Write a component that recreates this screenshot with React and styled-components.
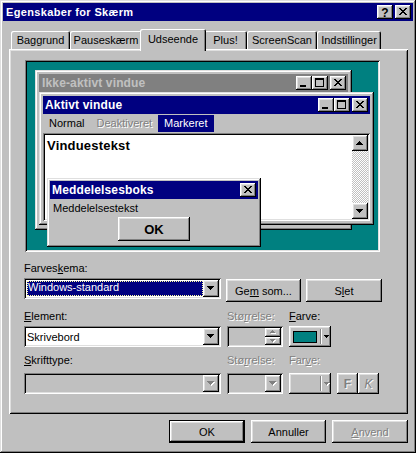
import React from "react";
import styled, { createGlobalStyle, css } from "styled-components";

const GlobalStyle = createGlobalStyle`
  html, body { margin: 0; padding: 0; background: #c0c0c0; }
  body { font-family: "Liberation Sans", Arial, sans-serif; font-size: 11px; color: #000; }
  * { box-sizing: border-box; }
`;

const raised = css`
  box-shadow: inset -1px -1px #000, inset 1px 1px #fff, inset -2px -2px #808080, inset 2px 2px #dfdfdf;
`;
const frame = css`
  box-shadow: inset -1px -1px #000, inset 1px 1px #dfdfdf, inset -2px -2px #808080, inset 2px 2px #fff;
`;
const sunken = css`
  box-shadow: inset 1px 1px #808080, inset -1px -1px #fff, inset 2px 2px #000, inset -2px -2px #dfdfdf;
`;
const disabledText = css`
  color: #808080;
  text-shadow: 1px 1px 0 #fff;
`;

/* ---------- glyphs ---------- */
const CLOSE = ["XX....XX", ".XX..XX.", "..XXXX..", "...XX...", "..XXXX..", ".XX..XX.", "XX....XX"];

const CloseGlyph = ({ x = 4, y = 3 }) => (
  <g fill="#000">
    {CLOSE.flatMap((row, r) =>
      row.split("").map((c, i) => (c === "X" ? <rect key={r + "-" + i} x={x + i} y={y + r} width={1} height={1} /> : null))
    )}
  </g>
);

const Caption = ({ kind }) => (
  <CapButton $gap={kind === "close" || kind === "help"}>
    <svg width="16" height="14" shapeRendering="crispEdges">
      {kind === "close" && <CloseGlyph />}
      {kind === "min" && <rect x="4" y="9" width="6" height="2" fill="#000" />}
      {kind === "max" && (
        <g fill="#000">
          <rect x="3" y="2" width="9" height="2" />
          <rect x="3" y="2" width="1" height="9" />
          <rect x="11" y="2" width="1" height="9" />
          <rect x="3" y="10" width="9" height="1" />
        </g>
      )}
      {kind === "help" && (
        <text x="8" y="11.5" textAnchor="middle" fontSize="12" fontWeight="bold" fontFamily="Liberation Sans, Arial, sans-serif" fill="#000">?</text>
      )}
    </svg>
  </CapButton>
);

const Arrow = ({ dir = "down", size = 4, disabled }) => {
  const w = size * 2 - 1;
  const rows = [];
  for (let i = 0; i < size; i++) {
    const rw = dir === "down" ? w - 2 * i : 1 + 2 * i;
    rows.push(<rect key={i} x={(w - rw) / 2} y={i} width={rw} height={1} />);
  }
  return (
    <svg width={w + 1} height={size + 1} shapeRendering="crispEdges">
      {disabled && <g fill="#fff" transform="translate(1,1)">{rows}</g>}
      <g fill={disabled ? "#808080" : "#000"}>{rows}</g>
    </svg>
  );
};

/* ---------- dialog shell ---------- */
const Dialog = styled.div`
  width: 416px;
  height: 453px;
  padding: 3px;
  background: #c0c0c0;
  ${frame};
  display: flex;
  flex-direction: column;
`;

const TitleBar = styled.div`
  height: 18px;
  flex: none;
  background: ${(p) => p.$bg || "#000080"};
  color: ${(p) => p.$fg || "#fff"};
  font-weight: bold;
  font-size: ${(p) => p.$fs || 11}px;
  letter-spacing: ${(p) => p.$ls ?? 0.35}px;
  display: flex;
  align-items: center;
  padding: 0 2px 0 ${(p) => p.$pl ?? 3}px;
  white-space: nowrap;
  overflow: hidden;
`;

const TitleText = styled.span`
  flex: 1;
`;

const CapButton = styled.div`
  width: 16px;
  height: 14px;
  flex: none;
  background: #c0c0c0;
  ${raised};
  margin-left: ${(p) => (p.$gap ? 2 : 0)}px;
  display: flex;
  svg { display: block; }
`;

const Body = styled.div`
  flex: 1;
  padding: 8px 5px 0 6px;
  display: flex;
  flex-direction: column;
`;

const TabRow = styled.div`
  height: 20px;
  display: flex;
  align-items: flex-end;
  padding-left: 2px;
  position: relative;
  z-index: 1;
`;

const Tab = styled.div`
  position: relative;
  flex: none;
  width: ${(p) => p.$w + (p.$active ? 4 : 0)}px;
  height: ${(p) => (p.$active ? 22 : 18)}px;
  margin: ${(p) => (p.$active ? "0 -2px -2px" : "0")};
  z-index: ${(p) => (p.$active ? 2 : 1)};
  padding-bottom: ${(p) => (p.$active ? 3 : 0)}px;
  background: #c0c0c0;
  border-radius: 2px 2px 0 0;
  box-shadow: inset 1px 1px #fff, inset -1px 0 #000, inset -2px 0 #808080;
  display: flex;
  align-items: center;
  justify-content: center;
  white-space: nowrap;
`;

const Panel = styled.div`
  height: 365px;
  flex: none;
  background: #c0c0c0;
  box-shadow: inset 1px 1px #fff, inset -1px -1px #000, inset 2px 2px #dfdfdf, inset -2px -2px #808080;
  padding: 11px 0 0 15px;
  display: flex;
  flex-direction: column;
`;

/* ---------- preview (free canvas of little windows) ---------- */
const Preview = styled.div`
  position: relative;
  margin-left: 1px;
  width: 355px;
  height: 192px;
  flex: none;
  background: #008080;
  ${sunken};
  overflow: hidden;
`;

const MiniWindow = styled.div`
  position: absolute;
  left: ${(p) => p.$x}px;
  top: ${(p) => p.$y}px;
  width: ${(p) => p.$w}px;
  height: ${(p) => p.$h}px;
  background: #c0c0c0;
  ${frame};
  padding: ${(p) => p.$pad ?? 4}px;
  display: flex;
  flex-direction: column;
`;

const MenuBar = styled.div`
  height: 19px;
  flex: none;
  display: flex;
  align-items: flex-start;
`;

const MenuItem = styled.div`
  height: 17px;
  margin-top: 1px;
  line-height: 17px;
  padding: 0 6px;
  background: ${(p) => (p.$selected ? "#000080" : "transparent")};
  color: ${(p) => (p.$selected ? "#fff" : "#000")};
  ${(p) => p.$disabled && disabledText};
`;

const Client = styled.div`
  flex: 1;
  background: #fff;
  ${sunken};
  padding: 2px;
  display: flex;
`;

const ClientText = styled.div`
  flex: 1;
  padding: 3px 2px;
  font-size: 13px;
  font-weight: bold;
  letter-spacing: 0.2px;
  line-height: 15px;
`;

const Scrollbar = styled.div`
  width: 16px;
  flex: none;
  display: flex;
  flex-direction: column;
`;

const ScrollButton = styled.div`
  width: 16px;
  height: 16px;
  flex: none;
  background: #c0c0c0;
  ${raised};
  display: flex;
  align-items: center;
  justify-content: center;
  svg { display: block; }
`;

const ScrollTrack = styled.div`
  flex: 1;
  background: repeating-conic-gradient(#fff 0% 25%, #c0c0c0 0% 50%) 0 0 / 2px 2px;
`;

const MsgText = styled.div`
  line-height: 13px;
  padding: 3px 0 0 3px;
`;

const MsgButtonRow = styled.div`
  display: flex;
  justify-content: center;
  margin-top: 2px;
`;

/* ---------- form controls ---------- */
const Label = styled.div`
  height: 13px;
  line-height: 13px;
  white-space: nowrap;
  ${(p) => p.$disabled && disabledText};
`;

const Button = styled.div`
  width: ${(p) => p.$w}px;
  height: ${(p) => p.$h || 23}px;
  flex: none;
  background: #c0c0c0;
  ${raised};
  ${(p) =>
    p.$default &&
    css`
      box-shadow: inset 0 0 0 1px #000, inset -2px -2px #000, inset 2px 2px #fff, inset -3px -3px #808080,
        inset 3px 3px #dfdfdf;
    `};
  display: flex;
  align-items: center;
  justify-content: center;
  font-size: ${(p) => p.$fs || 11}px;
  font-weight: ${(p) => (p.$bold ? "bold" : "normal")};
  font-style: ${(p) => (p.$italic ? "italic" : "normal")};
  margin-top: ${(p) => p.$mt || 0}px;
  ${(p) => p.$disabled && disabledText};
`;

const Row = styled.div`
  display: flex;
  align-items: flex-start;
  gap: 5px;
  margin-top: 3px;
`;

const Field = styled.div`
  width: ${(p) => p.$w}px;
  height: 21px;
  flex: none;
  background: ${(p) => (p.$disabled ? "#c0c0c0" : "#fff")};
  ${sunken};
  padding: 2px;
  display: flex;
`;

const FieldValue = styled.div`
  flex: 1;
  display: flex;
  align-items: center;
  padding-left: 1px;
  white-space: nowrap;
`;

const Selection = styled.div`
  width: 176px;
  height: 15px;
  line-height: 13px;
  padding-left: 1px;
  background: #000080;
  color: #fff;
  outline: 1px dotted #ffff9f;
  outline-offset: -1px;
`;

const DropButton = styled.div`
  width: 16px;
  flex: none;
  background: #c0c0c0;
  ${raised};
  display: flex;
  align-items: center;
  justify-content: center;
  svg { display: block; }
`;

const Spin = styled.div`
  width: 16px;
  flex: none;
  display: flex;
  flex-direction: column;
`;

const SpinHalf = styled.div`
  flex: 1;
  background: #c0c0c0;
  ${raised};
  display: flex;
  align-items: center;
  justify-content: center;
  svg { display: block; }
`;

const FieldGrid = styled.div`
  display: grid;
  grid-template-columns: 197px 56px 42px auto;
  grid-template-rows: 13px 21px;
  column-gap: 6px;
  row-gap: ${(p) => p.$gap}px;
  margin-top: ${(p) => p.$mt}px;
`;

const ColorButton = styled.div`
  width: 42px;
  height: 21px;
  background: #c0c0c0;
  ${raised};
  display: flex;
  align-items: center;
  padding-left: 4px;
  svg { display: block; }
`;

const Swatch = styled.div`
  width: 24px;
  height: 12px;
  flex: none;
  border: 1px solid #000;
  background: ${(p) => p.$color};
  visibility: ${(p) => (p.$hidden ? "hidden" : "visible")};
`;

const Separator = styled.div`
  width: 2px;
  height: 15px;
  margin: 0 2px 0 3px;
  border-left: 1px solid #808080;
  border-right: 1px solid #fff;
`;

const StyleButtons = styled.div`
  display: flex;
`;

const FooterRow = styled.div`
  display: flex;
  justify-content: flex-end;
  gap: 6px;
  margin-top: 6px;
`;

const TABS = [
  ["Baggrund", 59],
  ["Pauseskærm", 72],
  ["Udseende", 62, true],
  ["Plus!", 43],
  ["ScreenScan", 70],
  ["Indstillinger", 64],
];

const Combo = ({ w, disabled, children }) => (
  <Field $w={w} $disabled={disabled}>
    <FieldValue>{children}</FieldValue>
    <DropButton>
      <Arrow disabled={disabled} />
    </DropButton>
  </Field>
);

export default function App() {
  return (
    <>
      <GlobalStyle />
      <Dialog>
        <TitleBar>
          <TitleText>Egenskaber for Skærm</TitleText>
          <Caption kind="help" />
          <Caption kind="close" />
        </TitleBar>
        <Body>
          <TabRow>
            {TABS.map(([t, w, a]) => (
              <Tab key={t} $w={w} $active={a}>
                {t}
              </Tab>
            ))}
          </TabRow>
          <Panel>
            <Preview>
              <MiniWindow $x={10} $y={10} $w={317} $h={160}>
                <TitleBar $bg="#808080" $fg="#c0c0c0" $pl={3} $fs={12} $ls={0.15}>
                  <TitleText>Ikke-aktivt vindue</TitleText>
                  <Caption kind="min" />
                  <Caption kind="max" />
                  <Caption kind="close" />
                </TitleBar>
              </MiniWindow>
              <MiniWindow $x={14} $y={32} $w={335} $h={133}>
                <TitleBar $pl={2} $fs={12} $ls={0.15}>
                  <TitleText>Aktivt vindue</TitleText>
                  <Caption kind="min" />
                  <Caption kind="max" />
                  <Caption kind="close" />
                </TitleBar>
                <MenuBar>
                  <MenuItem>Normal</MenuItem>
                  <MenuItem $disabled>Deaktiveret</MenuItem>
                  <MenuItem $selected>Markeret</MenuItem>
                </MenuBar>
                <Client>
                  <ClientText>Vinduestekst</ClientText>
                  <Scrollbar>
                    <ScrollButton>
                      <Arrow dir="up" />
                    </ScrollButton>
                    <ScrollTrack />
                    <ScrollButton>
                      <Arrow />
                    </ScrollButton>
                  </Scrollbar>
                </Client>
              </MiniWindow>
              <MiniWindow $x={22} $y={118} $w={214} $h={69} $pad={3}>
                <TitleBar $pl={2} $fs={12} $ls={0.15}>
                  <TitleText>Meddelelsesboks</TitleText>
                  <Caption kind="close" />
                </TitleBar>
                <MsgText>Meddelelsestekst</MsgText>
                <MsgButtonRow>
                  <Button $w={72} $h={24} $bold $fs={13}>
                    OK
                  </Button>
                </MsgButtonRow>
              </MiniWindow>
            </Preview>

            <Label style={{ marginTop: 10 }}>
              Farves<u>k</u>ema:
            </Label>
            <Row>
              <Combo w={197}>
                <Selection>Windows-standard</Selection>
              </Combo>
              <Button $w={75} $mt={1}>
                Ge<u>m</u>&nbsp;som...
              </Button>
              <Button $w={76} $mt={1}>
                S<u>l</u>et
              </Button>
            </Row>

            <FieldGrid $mt={8} $gap={3}>
              <Label>
                <u>E</u>lement:
              </Label>
              <Label $disabled>
                Stø<u>r</u>relse:
              </Label>
              <Label>
                <u>F</u>arve:
              </Label>
              <span />
              <Combo w={197}>Skrivebord</Combo>
              <Field $w={56} $disabled>
                <FieldValue />
                <Spin>
                  <SpinHalf>
                    <Arrow dir="up" size={3} disabled />
                  </SpinHalf>
                  <SpinHalf>
                    <Arrow size={3} disabled />
                  </SpinHalf>
                </Spin>
              </Field>
              <ColorButton>
                <Swatch $color="#008080" />
                <Separator />
                <Arrow size={3} />
              </ColorButton>
              <span />
            </FieldGrid>

            <FieldGrid $mt={7} $gap={6}>
              <Label>
                <u>S</u>krifttype:
              </Label>
              <Label $disabled>
                Stø<u>r</u>relse:
              </Label>
              <Label $disabled>
                Far<u>v</u>e:
              </Label>
              <span />
              <Combo w={197} disabled />
              <Combo w={56} disabled />
              <ColorButton>
                <Swatch $hidden />
                <Separator />
                <Arrow size={3} disabled />
              </ColorButton>
              <StyleButtons>
                <Button $w={21} $h={21} $bold $fs={12} $disabled>
                  F
                </Button>
                <Button $w={21} $h={21} $italic $fs={12} $disabled>
                  K
                </Button>
              </StyleButtons>
            </FieldGrid>
          </Panel>
          <FooterRow>
            <Button $w={76} $default>
              OK
            </Button>
            <Button $w={75}>Annuller</Button>
            <Button $w={76} $disabled>
              <span>
                <u>A</u>nvend
              </span>
            </Button>
          </FooterRow>
        </Body>
      </Dialog>
    </>
  );
}
